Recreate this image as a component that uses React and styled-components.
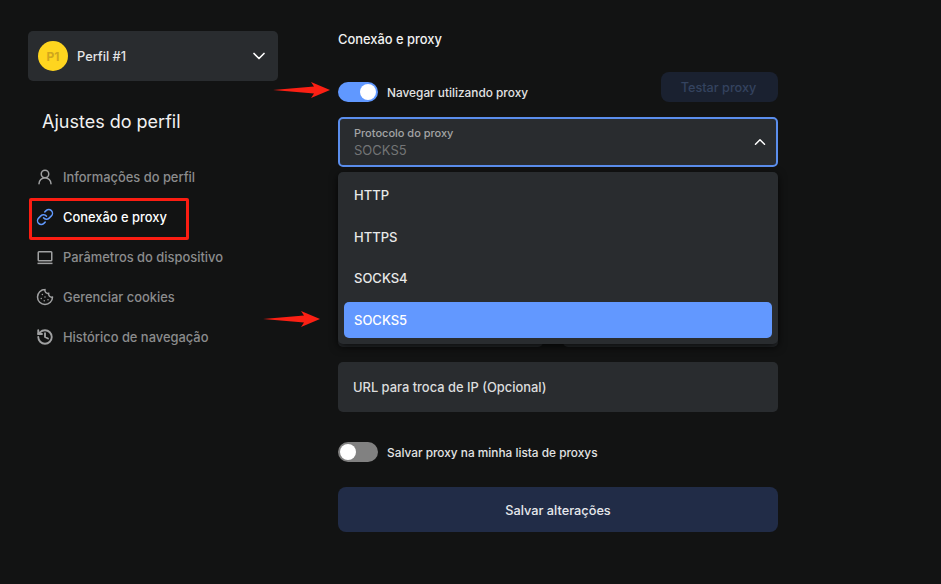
import React from 'react'
import styled, { createGlobalStyle } from 'styled-components'
import { LuChevronDown, LuChevronUp, LuUserRound, LuLink, LuCookie, LuHistory } from 'react-icons/lu'

const GlobalStyle = createGlobalStyle`
  html, body {
    margin: 0;
    background: #121313;
    font-family: Inter, "Liberation Sans", sans-serif;
  }
  * { box-sizing: border-box; }
`

const Page = styled.div`
  position: relative;
  width: 941px;
  height: 584px;
  overflow: hidden;
  display: flex;
  background: #121313;
`

const Sidebar = styled.aside`
  width: 310px;
  padding: 31px 0 0 28px;
`

const ProfileBox = styled.div`
  width: 250px;
  height: 50px;
  background: #292c2f;
  border-radius: 5px;
  display: flex;
  align-items: center;
  padding: 0 9px 0 10px;
  color: #fff;
`

const Avatar = styled.div`
  width: 30px;
  height: 30px;
  border-radius: 50%;
  background: #fed51f;
  color: #cfa61d;
  font-size: 12px;
  font-weight: 700;
  display: flex;
  align-items: center;
  justify-content: center;
`

const ProfileName = styled.span`
  flex: 1;
  margin-left: 9px;
  font-size: 12.8px;
  font-weight: 500;
  color: #e4e5e6;
`

const SideTitle = styled.h2`
  margin: 29px 0 0 14px;
  font-size: 18px;
  line-height: 24px;
  font-weight: 400;
  color: #f1f1f1;
`

const Nav = styled.nav`
  margin-top: 23px;
  padding-left: 8px;
  display: flex;
  flex-direction: column;
`

const NavItem = styled.div`
  height: 40px;
  display: flex;
  align-items: center;
  gap: 9px;
  font-size: 12.9px;
  font-weight: 500;
  color: ${({ $active }) => ($active ? '#ffffff' : '#8b8c8d')};
  svg {
    width: 18px;
    height: 18px;
    flex: none;
    color: ${({ $active }) => ($active ? '#6098fb' : '#a0a1a2')};
  }
`

const Main = styled.main`
  width: 440px;
  margin-left: 28px;
  padding-top: 31px;
  display: flex;
  flex-direction: column;
`

const Title = styled.h1`
  margin: 0;
  font-size: 12.9px;
  line-height: 17px;
  font-weight: 500;
  color: #f1f1f1;
`

const ProxyRow = styled.div`
  margin-top: 24px;
  height: 30px;
  display: flex;
  align-items: flex-start;
  justify-content: space-between;
`

const ToggleLine = styled.div`
  display: flex;
  align-items: center;
  gap: 9px;
  margin-top: ${({ $top }) => $top || 0}px;
  font-size: 11.85px;
  font-weight: 500;
  color: #e2e3e4;
`

const ToggleText = styled.span`
  padding-top: 2px;
`

const Track = styled.div`
  width: 40px;
  height: 20px;
  border-radius: 10px;
  padding: 2px;
  display: flex;
  justify-content: ${({ $on }) => ($on ? 'flex-end' : 'flex-start')};
  background: ${({ $on }) => ($on ? '#6098ff' : '#818181')};
`

const Knob = styled.div`
  width: 16px;
  height: 16px;
  border-radius: 50%;
  background: #fff;
`

const TestButton = styled.button`
  width: 117px;
  height: 30px;
  border: none;
  border-radius: 8px;
  padding: 0 2px 0 0;
  background: #1a2130;
  color: #34435f;
  font: 500 12.7px Inter, sans-serif;
`

const SelectBox = styled.div`
  position: relative;
  margin-top: 15px;
  height: 50px;
  border: 2px solid #5b8eed;
  border-radius: 5px;
  background: #292c2f;
  padding: 7px 14px;
  display: flex;
  align-items: center;
  justify-content: space-between;
  svg {
    width: 18px;
    height: 18px;
    color: #fff;
    margin-right: -7px;
  }
`

const SelectLabel = styled.div`
  font-size: 11px;
  line-height: 16px;
  font-weight: 500;
  color: #a3a4a5;
`

const SelectValue = styled.div`
  font-size: 13px;
  line-height: 18px;
  color: #737576;
`

const Dropdown = styled.div`
  position: absolute;
  left: -2px;
  right: -2px;
  top: 53px;
  height: 172px;
  z-index: 2;
  padding: 5px 6px 6px;
  border-radius: 5px;
  background: #292c2f;
  box-shadow: 0 3px 8px rgba(0, 0, 0, 0.75);
  display: flex;
  flex-direction: column;
  gap: 5.67px;
`

const Option = styled.div`
  height: 36px;
  flex: none;
  display: flex;
  align-items: center;
  padding-left: 10px;
  border-radius: 5px;
  font-size: 13px;
  font-weight: 500;
  color: ${({ $selected }) => ($selected ? '#fff' : '#e8e9e9')};
  background: ${({ $selected }) => ($selected ? '#6298ff' : 'transparent')};
`

const HiddenFields = styled.div`
  margin-top: 15px;
  height: 165px;
  display: flex;
  align-items: flex-end;
  gap: 20px;
`

const HiddenField = styled.div`
  flex: ${({ $grow }) => $grow};
  height: 50px;
  border-radius: 5px;
  background: #292c2f;
`

const Field = styled.div`
  margin-top: 15px;
  height: 50px;
  border-radius: 5px;
  background: #292c2f;
  padding-left: 15px;
  display: flex;
  align-items: center;
  font-size: 12.9px;
  font-weight: 500;
  color: #dcdddd;
`

const SaveButton = styled.button`
  margin-top: 25px;
  height: 45px;
  border: none;
  border-radius: 8px;
  padding: 2px 0 0;
  background: #212c47;
  color: #e6e8ec;
  font: 500 12.75px Inter, sans-serif;
`

const Annotation = styled.div`
  position: absolute;
  left: 29px;
  top: 198px;
  width: 160px;
  height: 42px;
  border: 3px solid #fb1d12;
  border-radius: 2px;
`

const ArrowSvg = styled.svg`
  position: absolute;
  left: ${({ $x }) => $x}px;
  top: ${({ $y }) => $y}px;
`

const Arrow = ({ x, y }) => (
  <ArrowSvg $x={x} $y={y} width="58" height="18" viewBox="0 0 58 18">
    <polygon points="0,9 41,5.5 38,1 57,9 38,17 41,12.5" fill="#fb2014" />
  </ArrowSvg>
)

const LaptopIcon = () => (
  <svg viewBox="0 0 24 24" fill="none" stroke="currentColor" strokeWidth="2">
    <rect x="3" y="5" width="18" height="12" rx="1" />
    <path d="M2 20.5h20" />
  </svg>
)

const menu = [
  { icon: <LuUserRound />, label: 'Informações do perfil' },
  { icon: <LuLink />, label: 'Conexão e proxy', active: true },
  { icon: <LaptopIcon />, label: 'Parâmetros do dispositivo' },
  { icon: <LuCookie />, label: 'Gerenciar cookies' },
  { icon: <LuHistory strokeWidth={2.5} />, label: 'Histórico de navegação' },
]

const options = ['HTTP', 'HTTPS', 'SOCKS4', 'SOCKS5']

export default function App() {
  return (
    <Page>
      <GlobalStyle />
      <Sidebar>
        <ProfileBox>
          <Avatar>P1</Avatar>
          <ProfileName>Perfil #1</ProfileName>
          <LuChevronDown size={20} />
        </ProfileBox>
        <SideTitle>Ajustes do perfil</SideTitle>
        <Nav>
          {menu.map((item) => (
            <NavItem key={item.label} $active={item.active}>
              {item.icon}
              {item.label}
            </NavItem>
          ))}
        </Nav>
      </Sidebar>

      <Main>
        <Title>Conexão e proxy</Title>
        <ProxyRow>
          <ToggleLine $top={10}>
            <Track $on>
              <Knob />
            </Track>
            <ToggleText>Navegar utilizando proxy</ToggleText>
          </ToggleLine>
          <TestButton>Testar proxy</TestButton>
        </ProxyRow>
        <SelectBox>
          <div>
            <SelectLabel>Protocolo do proxy</SelectLabel>
            <SelectValue>SOCKS5</SelectValue>
          </div>
          <LuChevronUp />
          <Dropdown>
            {options.map((o) => (
              <Option key={o} $selected={o === 'SOCKS5'}>
                {o}
              </Option>
            ))}
          </Dropdown>
        </SelectBox>
        <HiddenFields>
          <HiddenField $grow={205} />
          <HiddenField $grow={215} />
        </HiddenFields>
        <Field>URL para troca de IP (Opcional)</Field>
        <ToggleLine $top={30}>
          <Track>
            <Knob />
          </Track>
          <ToggleText>Salvar proxy na minha lista de proxys</ToggleText>
        </ToggleLine>
        <SaveButton>Salvar alterações</SaveButton>
      </Main>

      <Annotation />
      <Arrow x={273} y={81} />
      <Arrow x={263} y={310} />
    </Page>
  )
}
